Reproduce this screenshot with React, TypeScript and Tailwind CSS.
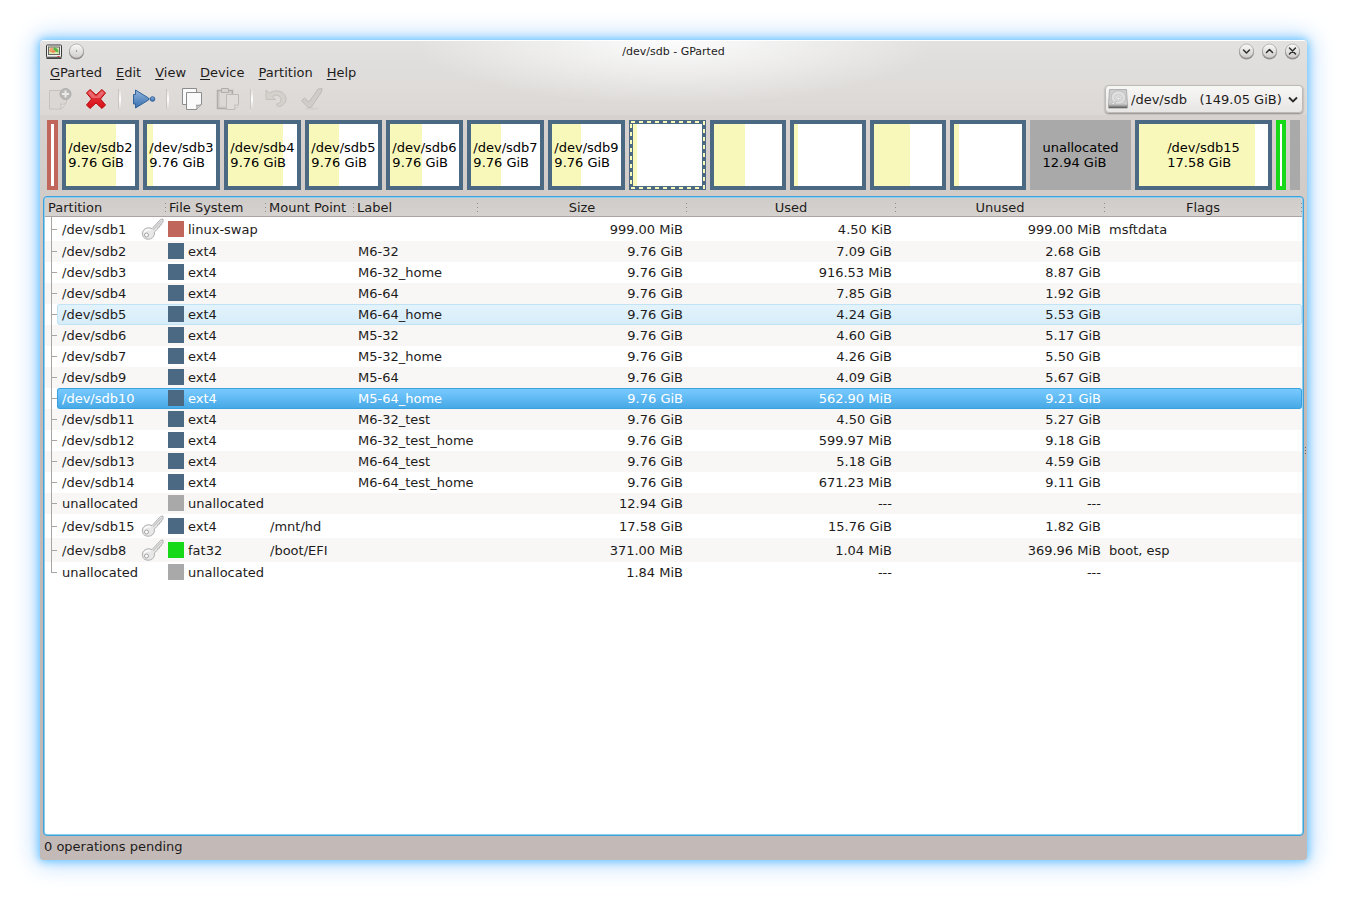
import type { ReactNode } from "react";

type Row = {
  name: string;
  locked?: boolean;
  fs: string;
  mount?: string;
  label?: string;
  size: string;
  used: string;
  unused: string;
  flags?: string;
  state?: "hover" | "selected";
};

type Block = {
  id: string;
  width: number;
  kind: "swap" | "ext4" | "fat32" | "free";
  used?: number;
  title?: string;
  size?: string;
  selected?: boolean;
};

const rows: Row[] = [
  { name: "/dev/sdb1", locked: true, fs: "linux-swap", size: "999.00 MiB", used: "4.50 KiB", unused: "999.00 MiB", flags: "msftdata" },
  { name: "/dev/sdb2", fs: "ext4", label: "M6-32", size: "9.76 GiB", used: "7.09 GiB", unused: "2.68 GiB" },
  { name: "/dev/sdb3", fs: "ext4", label: "M6-32_home", size: "9.76 GiB", used: "916.53 MiB", unused: "8.87 GiB" },
  { name: "/dev/sdb4", fs: "ext4", label: "M6-64", size: "9.76 GiB", used: "7.85 GiB", unused: "1.92 GiB" },
  { name: "/dev/sdb5", fs: "ext4", label: "M6-64_home", size: "9.76 GiB", used: "4.24 GiB", unused: "5.53 GiB", state: "hover" },
  { name: "/dev/sdb6", fs: "ext4", label: "M5-32", size: "9.76 GiB", used: "4.60 GiB", unused: "5.17 GiB" },
  { name: "/dev/sdb7", fs: "ext4", label: "M5-32_home", size: "9.76 GiB", used: "4.26 GiB", unused: "5.50 GiB" },
  { name: "/dev/sdb9", fs: "ext4", label: "M5-64", size: "9.76 GiB", used: "4.09 GiB", unused: "5.67 GiB" },
  { name: "/dev/sdb10", fs: "ext4", label: "M5-64_home", size: "9.76 GiB", used: "562.90 MiB", unused: "9.21 GiB", state: "selected" },
  { name: "/dev/sdb11", fs: "ext4", label: "M6-32_test", size: "9.76 GiB", used: "4.50 GiB", unused: "5.27 GiB" },
  { name: "/dev/sdb12", fs: "ext4", label: "M6-32_test_home", size: "9.76 GiB", used: "599.97 MiB", unused: "9.18 GiB" },
  { name: "/dev/sdb13", fs: "ext4", label: "M6-64_test", size: "9.76 GiB", used: "5.18 GiB", unused: "4.59 GiB" },
  { name: "/dev/sdb14", fs: "ext4", label: "M6-64_test_home", size: "9.76 GiB", used: "671.23 MiB", unused: "9.11 GiB" },
  { name: "unallocated", fs: "unallocated", size: "12.94 GiB", used: "---", unused: "---" },
  { name: "/dev/sdb15", locked: true, fs: "ext4", mount: "/mnt/hd", size: "17.58 GiB", used: "15.76 GiB", unused: "1.82 GiB" },
  { name: "/dev/sdb8", locked: true, fs: "fat32", mount: "/boot/EFI", size: "371.00 MiB", used: "1.04 MiB", unused: "369.96 MiB", flags: "boot, esp" },
  { name: "unallocated", fs: "unallocated", size: "1.84 MiB", used: "---", unused: "---" },
];

// width = share of the disk, used = percent of the partition that is filled
const blocks: Block[] = [
  { id: "sdb1", width: 11, kind: "swap" },
  { id: "sdb2", width: 77, kind: "ext4", used: 72.6, title: "/dev/sdb2", size: "9.76 GiB" },
  { id: "sdb3", width: 77, kind: "ext4", used: 9, title: "/dev/sdb3", size: "9.76 GiB" },
  { id: "sdb4", width: 77, kind: "ext4", used: 80, title: "/dev/sdb4", size: "9.76 GiB" },
  { id: "sdb5", width: 77, kind: "ext4", used: 43.4, title: "/dev/sdb5", size: "9.76 GiB" },
  { id: "sdb6", width: 77, kind: "ext4", used: 47, title: "/dev/sdb6", size: "9.76 GiB" },
  { id: "sdb7", width: 77, kind: "ext4", used: 43.6, title: "/dev/sdb7", size: "9.76 GiB" },
  { id: "sdb9", width: 77, kind: "ext4", used: 42, title: "/dev/sdb9", size: "9.76 GiB" },
  { id: "sdb10", width: 77, kind: "ext4", used: 5.8, selected: true },
  { id: "sdb11", width: 76, kind: "ext4", used: 46 },
  { id: "sdb12", width: 76, kind: "ext4", used: 6 },
  { id: "sdb13", width: 76, kind: "ext4", used: 53 },
  { id: "sdb14", width: 76, kind: "ext4", used: 7 },
  { id: "free1", width: 101, kind: "free", title: "unallocated", size: "12.94 GiB" },
  { id: "sdb15", width: 137, kind: "ext4", used: 90, title: "/dev/sdb15", size: "17.58 GiB" },
  { id: "sdb8", width: 10, kind: "fat32" },
  { id: "free2", width: 10, kind: "free" },
];

const blockStyles = {
  swap: "border-4 border-[#c1665a] bg-white",
  ext4: "border-4 border-[#4b6983] bg-white",
  fat32: "border-4 border-[#18d918] bg-white",
  free: "bg-[#a9a9a9]",
};

const swatches: Record<string, string> = {
  "linux-swap": "bg-[#c1665a]",
  ext4: "bg-[#4b6983]",
  fat32: "bg-[#18d918]",
  unallocated: "bg-[#a9a9a9]",
};

const menus = ["GParted", "Edit", "View", "Device", "Partition", "Help"];
const columns = ["Partition", "File System", "Mount Point", "Label", "Size", "Used", "Unused", "Flags"];

function WindowButton({ label, path, width = 1.5 }: { label: string; path: string; width?: number }) {
  return (
    <button type="button" aria-label={label}>
      <svg width="17" height="17" viewBox="0 0 17 17" fill="none">
        <circle cx="8.5" cy="9" r="7.5" fill="#8d8a88" />
        <circle cx="8.5" cy="8" r="7" fill="url(#knob)" stroke="#a5a2a0" strokeWidth="0.7" />
        <path d={path} stroke="#2f2f2f" strokeWidth={width} strokeLinecap="round" strokeLinejoin="round" />
      </svg>
    </button>
  );
}

function ToolButton({ label, disabled, children }: { label: string; disabled?: boolean; children: ReactNode }) {
  return (
    <button type="button" aria-label={label} disabled={disabled} className="flex h-6 w-9 items-center justify-center">
      {children}
    </button>
  );
}

function Separator() {
  return <span className="mx-[5px] h-5 w-[2px] bg-linear-to-b from-transparent via-white to-transparent shadow-[-1px_0_0_#cbc6c4]" />;
}

function AppIcon() {
  return (
    <svg width="16" height="16" viewBox="0 0 16 16">
      <rect x="0.5" y="1" width="15" height="12.5" rx="0.8" fill="#f1f1ee" stroke="#3a3a3a" />
      <rect x="2" y="2.5" width="12" height="8.5" fill="#666" />
      <rect x="3" y="3.5" width="10" height="6.5" fill="#d8e8b0" />
      <path d="M3 7c0-2 2-3.500 4-3.500L7.500 6 5 8.500z" fill="#f0a070" />
      <path d="M7.500 3.500c3 0 5 1.500 5 5L9 7.500 7.500 6z" fill="#58b947" />
      <path d="M5 7.500 8 6l2 1.500L7 9z" fill="#f08050" />
      <path d="M1 12h14v1.500H1z" fill="#bbb" />
      <path d="M.5 13.500h15V15H.5z" fill="#444" />
      <path d="M11.500 12h2v1h-2z" fill="#d33" />
    </svg>
  );
}

function KeyIcon() {
  return (
    <svg width="23" height="22" viewBox="0 0 23 22" className="shrink-0">
      <path
        d="M11 10.600 19.600 1.400 22 1v3.400l-1.600 1.200-.2 1.500-1.500.4-.3 1.600-1.500.3-.3 1.600-3.200 2.900c.6 3-1 6-3.900 7-2.600.9-5.800.1-7.200-2-1.600-2.500-1.300-5.500.7-7.300 2.200-2 5-2.400 8-1z"
        fill="#e8e8e8"
        stroke="#a8a8a8"
        strokeWidth="0.9"
        strokeLinejoin="round"
      />
      <path d="M12 12 20.600 2.800" stroke="#c6c6c6" strokeWidth="1.2" />
      <path d="M3.500 14.500a4.500 4.500 0 0 1 6-2.500" stroke="#fff" strokeWidth="1.4" fill="none" />
      <circle cx="5.5" cy="17" r="2" fill="#fff" stroke="#999" strokeWidth="0.9" />
    </svg>
  );
}

function DiskIcon() {
  return (
    <svg width="20" height="20" viewBox="0 0 20 20">
      <path d="M1.500.5h17L19.500 16H.5z" fill="#cdcdcd" stroke="#a5a5a5" strokeWidth="0.8" />
      <path d="M.5 16h19v3.300H.5z" fill="#666" />
      <path d="M1 16h18v1.500H1z" fill="#a5a5a5" />
      <ellipse cx="10.5" cy="8.5" rx="7.3" ry="6.7" fill="#dfdfdf" stroke="#b8b8b8" strokeWidth="0.7" />
      <ellipse cx="10.5" cy="9" rx="4" ry="3.4" fill="none" stroke="#c2c2c2" strokeWidth="0.7" />
      <circle cx="10.5" cy="9.5" r="1.5" fill="#f6f6f6" stroke="#b0b0b0" strokeWidth="0.6" />
      <path d="M2.500 14.500 8.500 12.500l-3 3z" fill="#efefef" stroke="#aaa" strokeWidth="0.5" />
    </svg>
  );
}

function TitleBar() {
  return (
    <div className="grid grid-cols-[1fr_auto_1fr] items-center px-[6px] pt-px">
      <div className="flex items-center gap-[6px]">
        <AppIcon />
        <WindowButton label="Keep on all desktops" path="M8.5 8h.01" width={1} />
      </div>
      <h1 className="pt-px text-[11px] leading-[18px]">/dev/sdb - GParted</h1>
      <div className="flex items-center justify-end gap-[6px]">
        <WindowButton label="Minimize" path="M5.500 7l3 3 3-3" />
        <WindowButton label="Maximize" path="M5.500 9.500l3-3 3 3" />
        <WindowButton label="Close" path="M5.500 5l6 6M11.500 5l-6 6" />
      </div>
    </div>
  );
}

function Toolbar() {
  return (
    <div className="flex h-8 items-center justify-between pr-1 pl-[2px]">
      <div className="flex items-center">
        <ToolButton label="New partition" disabled>
          <svg width="24" height="24" viewBox="0 0 24 24" fill="#dad7d5" stroke="#c6c2c0">
            <path d="M1.500 3.500h17v12l-5 6.500h-12z" />
            <path d="M12.500 22c1-2 .5-4 0-5 2 .5 4 .5 6-1.500" fill="#e4e1df" />
            <circle cx="17.5" cy="7" r="5.5" fill="#bab8b6" stroke="#b0aeac" />
            <path d="M17.500 3.500v7M14 7h7" stroke="#eceae9" strokeWidth="2" />
          </svg>
        </ToolButton>
        <ToolButton label="Delete partition">
          <svg width="22" height="22" viewBox="0 0 22 22">
            <path
              d="M5 1.500 11 7l6-5.500 3.500 3.500-5 6 5 6-3.500 3.500-6-5.500-6 5.500L1.500 17l5-6-5-6z"
              fill="url(#red)"
              stroke="#b50d12"
              strokeLinejoin="round"
            />
            <path d="M5 3 11 8.500 17 3l2 2-4 5H7L3 5z" fill="#fff" opacity="0.25" />
          </svg>
        </ToolButton>
        <Separator />
        <ToolButton label="Resize or move partition">
          <svg width="24" height="22" viewBox="0 0 24 22" fill="url(#blue)" stroke="#34639a" strokeLinejoin="round">
            <path d="M15 11h4" stroke="#8db0d8" strokeWidth="2" />
            <path d="M3.500 2 16.500 10v2L3.500 20v-4h-2V6.500h2z" />
            <circle cx="20.5" cy="11" r="2.3" />
          </svg>
        </ToolButton>
        <Separator />
        <ToolButton label="Copy">
          <svg width="22" height="24" viewBox="0 0 22 24" fill="#fafafa" stroke="#8c8c8c">
            <path d="M1.500 1.500h14v16h-14z" />
            <path d="M5.500 5.500h15v12l-5 5h-10z" />
            <path d="M15.500 22.500c.8-1.800.6-3.500 0-4.500 1.500.5 3.500.5 5-.8" fill="#ddd" />
          </svg>
        </ToolButton>
        <ToolButton label="Paste" disabled>
          <svg width="24" height="24" viewBox="0 0 24 24" fill="#d0cdcb" stroke="#b0adab">
            <path d="M1.500 3.500h15v18h-15z" strokeWidth="1.5" />
            <path d="M4 5.500h10v14H4z" fill="#dbd8d6" stroke="none" />
            <path d="M5.500 1.500h7v4h-7z" fill="#d6d3d1" />
            <path d="M10.500 7.500h12v10l-4 5h-8z" fill="#dfdcda" stroke="#bcb9b7" />
            <path d="M18.500 22.500c.8-1.800.5-3.500 0-4.500 1.500.3 3 .3 4-.8" fill="#e9e6e5" stroke="#bcb9b7" />
          </svg>
        </ToolButton>
        <Separator />
        <ToolButton label="Undo" disabled>
          <svg width="24" height="22" viewBox="0 0 24 22">
            <path
              d="M2 2v9.500h9.500L8.500 8.500c3.500-2.500 8-1 8.500 2.500.4 3-1.500 4.500-4.500 5 .5 2 1.500 2.800 3 2.500 4-1 7-4.500 6.500-8.500C21.200 3.500 12 .5 5.500 5z"
              fill="#d4d0cc"
              stroke="#c4c0bc"
            />
          </svg>
        </ToolButton>
        <ToolButton label="Apply" disabled>
          <svg width="24" height="24" viewBox="0 0 24 24">
            <ellipse cx="12" cy="21.5" rx="7" ry="1.5" fill="#d5d1cf" />
            <path d="M1.500 13.500 4.500 11l4.500 4L18 2l4-.5-.5 3.500L11 20.500H8z" fill="#cfccc9" stroke="#bfbcb9" strokeLinejoin="round" />
          </svg>
        </ToolButton>
      </div>
      <div className="flex h-7 w-[198px] items-center rounded-[4px] border border-[#bdbab8] bg-linear-to-b from-[#f7f7f6] to-[#e8e6e4] pl-[2px] shadow-[0_1px_2px_#8a8785]">
        <DiskIcon />
        <div className="grid flex-1 items-center">
          <select
            aria-label="Device"
            className="col-start-1 row-start-1 w-full appearance-none bg-transparent pl-[3px] outline-none"
          >
            <option>{"/dev/sdb\u00a0\u00a0\u00a0(149.05 GiB)"}</option>
          </select>
          <svg width="10" height="7" viewBox="0 0 10 7" fill="none" className="pointer-events-none col-start-1 row-start-1 mr-1 justify-self-end">
            <path d="M1 1.500 5 5.500 9 1.500" stroke="#2b2b2b" strokeWidth="1.8" />
          </svg>
        </div>
      </div>
    </div>
  );
}

function DiskMap() {
  return (
    <div
      className="grid h-[70px] gap-1"
      style={{ gridTemplateColumns: blocks.map((b) => `minmax(0,${b.width}fr)`).join(" ") }}
    >
      {blocks.map((b) => (
        <div key={b.id} className={`relative flex items-center justify-center text-black ${blockStyles[b.kind]}`}>
          {b.used && <div className="absolute inset-y-0 left-0 bg-[#f8f8ba]" style={{ width: `${b.used}%` }} />}
          {b.title && (
            <p className="relative leading-[15px] whitespace-nowrap">
              {b.title}
              <br />
              {b.size}
            </p>
          )}
          {b.selected && (
            <svg className="absolute -inset-1 h-[70px] w-[calc(100%+8px)]" fill="none">
              <rect
                x="2"
                y="2"
                className="h-[66px] w-[calc(100%-4px)]"
                stroke="#f8f8ba"
                strokeWidth="2"
                strokeDasharray="4 4"
              />
            </svg>
          )}
        </div>
      ))}
    </div>
  );
}

function TreeLine({ last }: { last: boolean }) {
  return (
    <span className="flex w-3 shrink-0 flex-col self-stretch pl-[6px]">
      <span className="flex-1 border-b border-l border-[#a9a5a2]" />
      <span className={last ? "flex-1" : "flex-1 border-l border-[#a9a5a2]"} />
    </span>
  );
}

function PartitionRow({ row, index }: { row: Row; index: number }) {
  const stripe = index % 2 ? "bg-[#f8f7f6]" : "bg-white";
  let line = "";
  if (row.state === "selected") line = "bg-linear-to-b from-[#78caff] to-[#46a9e6] border-y border-[#3aa0de] text-white";
  if (row.state === "hover") line = "bg-linear-to-b from-[#e3f3fc] to-[#d6edf9] border-y border-[#c2e3f5]";
  const height = row.locked ? "h-6" : "h-[21px]";
  const flex = `flex items-center ${height}`;

  return (
    <tr className={stripe}>
      <td>
        <div className={`flex ${height}`}>
          <TreeLine last={index === rows.length - 1} />
          <div className={`flex flex-1 items-center justify-between pr-[2px] ${line} ${row.state ? "rounded-l-[3px] border-l pl-1" : "pl-[5px]"}`}>
            {row.name}
            {row.locked && <KeyIcon />}
          </div>
        </div>
      </td>
      <td>
        <div className={`${flex} gap-1 pl-[2px] ${line}`}>
          <span className={`mb-px size-4 ${swatches[row.fs]}`} />
          {row.fs}
        </div>
      </td>
      <td><div className={`${flex} pl-1 ${line}`}>{row.mount}</div></td>
      <td><div className={`${flex} pl-1 ${line}`}>{row.label}</div></td>
      <td><div className={`${flex} justify-end pr-1 ${line}`}>{row.size}</div></td>
      <td><div className={`${flex} justify-end pr-1 ${line}`}>{row.used}</div></td>
      <td><div className={`${flex} justify-end pr-1 ${line}`}>{row.unused}</div></td>
      <td><div className={`${flex} pl-1 ${line} ${row.state ? "rounded-r-[3px] border-r" : ""}`}>{row.flags}</div></td>
    </tr>
  );
}

function PartitionTable() {
  return (
    <table className="w-full table-fixed border-collapse">
      <colgroup>
        <col className="w-[121px]" />
        <col className="w-[100px]" />
        <col className="w-[88px]" />
        <col className="w-[124px]" />
        <col className="w-[209px]" />
        <col className="w-[209px]" />
        <col className="w-[209px]" />
        <col />
      </colgroup>
      <thead className="bg-linear-to-b from-[#d0ccc9] to-[#d6d2cf]">
        <tr>
          {columns.map((title, i) => (
            <th key={title} className="p-0 font-normal">
              <div className="flex h-[19px] items-center border-b border-[#aaa5a2]">
                <span className={`flex-1 whitespace-nowrap ${i < 4 ? "pl-[3px] text-left" : "text-center"}`}>{title}</span>
                <span className="h-[9px] w-px bg-[repeating-linear-gradient(#8f8b88_0_1px,transparent_1px_4px)]" />
              </div>
            </th>
          ))}
        </tr>
      </thead>
      <tbody>
        {rows.map((row, i) => (
          <PartitionRow key={i} row={row} index={i} />
        ))}
      </tbody>
    </table>
  );
}

export default function App() {
  return (
    <div className="h-screen bg-white p-10 font-['DejaVu_Sans',sans-serif] text-[13px] leading-[15px] text-[#1e1c1b]">
      <svg className="absolute size-0">
        <defs>
          <linearGradient id="knob" x2="0" y2="1">
            <stop stopColor="#fafafa" />
            <stop offset="1" stopColor="#cfccca" />
          </linearGradient>
          <linearGradient id="red" x2="0" y2="1">
            <stop stopColor="#e8434a" />
            <stop offset="1" stopColor="#d90d14" />
          </linearGradient>
          <linearGradient id="blue" x2="0" y2="1">
            <stop stopColor="#8fb4dd" />
            <stop offset="1" stopColor="#386fae" />
          </linearGradient>
        </defs>
      </svg>
      <main className="flex h-full flex-col rounded-[4px] bg-[#c3bab7] shadow-[0_0_8px_1px_#62c3ff,0_0_24px_4px_#b5d8ff]">
        <header className="rounded-t-[4px] border-t border-white bg-[radial-gradient(ellipse_260px_64px_at_50%_0,#fcfcfc,transparent),linear-gradient(#e2e1e0,#dcd8d5)]">
          <TitleBar />
          <nav className="flex gap-[14px] px-[10px] pt-1 pb-[3px]">
            {menus.map((menu) => (
              <button key={menu} type="button">
                <span className="underline underline-offset-2">{menu[0]}</span>
                {menu.slice(1)}
              </button>
            ))}
          </nav>
          <Toolbar />
        </header>
        <div className="flex min-h-0 flex-1 flex-col rounded-b-[4px] bg-[linear-gradient(#d7d2cf,#c3bab7_300px)]">
          <div className="px-[7px] pt-[5px] pb-[6px]">
            <DiskMap />
          </div>
          <div className="flex min-h-0 flex-1 pl-[3px]">
            <div className="flex-1 rounded-[4px] border border-[#3fa3d9] bg-[#8fcdee] p-px">
              <div className="h-full overflow-hidden rounded-[2px] bg-white">
                <PartitionTable />
              </div>
            </div>
            <div className="flex w-[3px] flex-col items-center justify-center gap-[2px] pb-[132px]">
              <span className="size-px bg-[#6b6664]" />
              <span className="size-px bg-[#6b6664]" />
              <span className="size-px bg-[#6b6664]" />
            </div>
          </div>
          <footer className="h-6 px-1 pt-[3px]">0 operations pending</footer>
        </div>
      </main>
    </div>
  );
}
